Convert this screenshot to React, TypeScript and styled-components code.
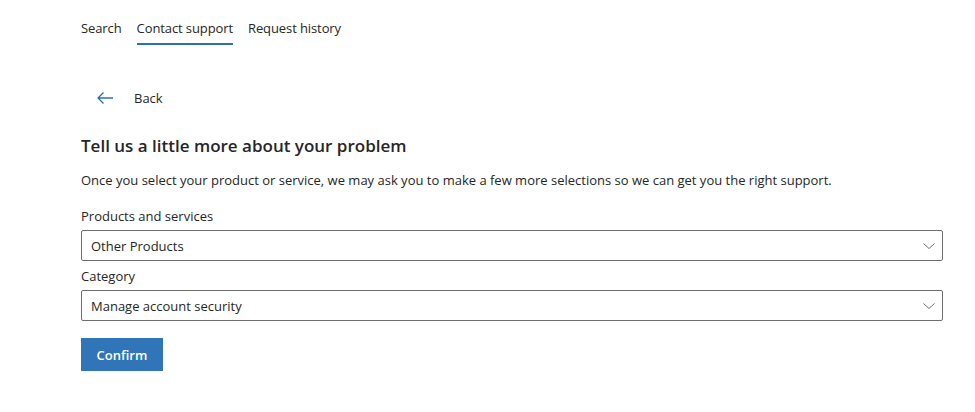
import React from "react";
import styled, { createGlobalStyle } from "styled-components";

const Global = createGlobalStyle`
  html, body { margin: 0; padding: 0; background: #fff; }
  body { font-family: "Segoe UI", "Open Sans", "Noto Sans", sans-serif; color: #262626; }
`;

const Page = styled.div`
  padding: 0 32px 0 81px;
  display: flex;
  flex-direction: column;
  width: 975px;
  box-sizing: border-box;
`;

const Tabs = styled.nav`
  display: flex;
  gap: 15px;
  padding-top: 18px;
`;

const Tab = styled.div<{ $active?: boolean }>`
  font-size: 13px;
  line-height: 20px;
  letter-spacing: -0.1px;
  color: #262626;
  padding-bottom: 5px;
  border-bottom: 2px solid ${(p) => (p.$active ? "#2f6fae" : "transparent")};
`;

const BackRow = styled.div`
  display: flex;
  align-items: center;
  gap: 20px;
  margin-top: 44px;
  padding-left: 15px;
  font-size: 13px;
  color: #262626;
`;

const Heading = styled.h2`
  margin: 27px 0 0;
  font-size: 17px;
  font-weight: 600;
  line-height: 24px;
  color: #262626;
`;

const Intro = styled.p`
  margin: 12px 0 0;
  font-size: 13px;
  line-height: 20px;
`;

const Label = styled.div<{ $gap: number }>`
  font-size: 13px;
  line-height: 20px;
  margin-top: ${(p) => p.$gap}px;
  margin-bottom: 4px;
`;

const Select = styled.div`
  height: 31px;
  box-sizing: border-box;
  border: 1px solid #6e6e6e;
  border-radius: 2px;
  display: flex;
  align-items: center;
  justify-content: space-between;
  padding: 0 6px 0 9px;
  font-size: 13px;
  color: #262626;
`;

const Field = styled.div`
  display: flex;
  flex-direction: column;
`;

const Confirm = styled.button`
  margin-top: 17px;
  align-self: flex-start;
  width: 82px;
  height: 33px;
  background: #2f75b8;
  color: #fff;
  border: none;
  font-family: inherit;
  font-size: 13px;
  font-weight: 600;
`;

const Chevron = () => (
  <svg width="14" height="14" viewBox="0 0 14 14" fill="none">
    <path d="M1.5 4.5 L7 9.5 L12.5 4.5" stroke="#707070" strokeWidth="1" />
  </svg>
);

const Arrow = () => (
  <svg width="18" height="14" viewBox="0 0 18 14" fill="none">
    <path d="M17 7 H2 M7.5 1.5 L2 7 L7.5 12.5" stroke="#2f6fae" strokeWidth="1.3" />
  </svg>
);

export default function App() {
  return (
    <>
      <Global />
      <Page>
        <Tabs>
          <Tab>Search</Tab>
          <Tab $active>Contact support</Tab>
          <Tab>Request history</Tab>
        </Tabs>
        <BackRow>
          <Arrow />
          <span>Back</span>
        </BackRow>
        <Heading>Tell us a little more about your problem</Heading>
        <Intro>
          Once you select your product or service, we may ask you to make a few more selections so we can get you the right support.
        </Intro>
        <Field>
          <Label $gap={16}>Products and services</Label>
          <Select>
            <span>Other Products</span>
            <Chevron />
          </Select>
        </Field>
        <Field>
          <Label $gap={5}>Category</Label>
          <Select>
            <span>Manage account security</span>
            <Chevron />
          </Select>
        </Field>
        <Confirm>Confirm</Confirm>
      </Page>
    </>
  );
}
